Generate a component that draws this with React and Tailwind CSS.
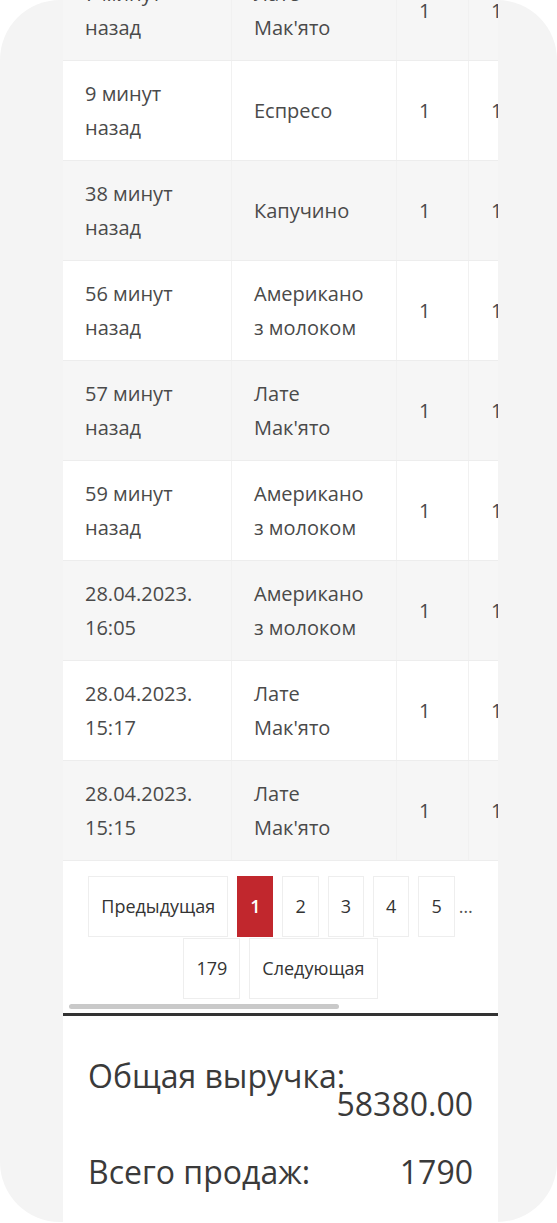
const rows = [
  { time: ["7 минут", "назад"], item: ["Лате", "Мак'ято"] },
  { time: ["9 минут", "назад"], item: ["Еспресо"] },
  { time: ["38 минут", "назад"], item: ["Капучино"] },
  { time: ["56 минут", "назад"], item: ["Американо", "з молоком"] },
  { time: ["57 минут", "назад"], item: ["Лате", "Мак'ято"] },
  { time: ["59 минут", "назад"], item: ["Американо", "з молоком"] },
  { time: ["28.04.2023.", "16:05"], item: ["Американо", "з молоком"] },
  { time: ["28.04.2023.", "15:17"], item: ["Лате", "Мак'ято"] },
  { time: ["28.04.2023.", "15:15"], item: ["Лате", "Мак'ято"] },
];

const pages = ["1", "2", "3", "4", "5"];

export default function App() {
  return (
    <div className="h-[1223px] w-[557px] overflow-hidden bg-white font-['Open_Sans','Noto_Sans',sans-serif]">
      <div className="h-[1222px] w-[557px] overflow-hidden rounded-[60px] bg-[#f4f4f4] pl-[63px] pr-[59px]">
        <div className="flex h-full flex-col bg-white">
          <div className="-mt-[39px] overflow-hidden">
            <div className="w-[700px]">
              {rows.map((r, i) => (
                <div key={i} className={`flex h-[100px] border-b border-[#ededed] text-[20px] leading-[34px] text-[#4a4a4a] ${i % 2 === 0 ? "bg-[#f6f6f6]" : "bg-white"}`}>
                  <div className="flex w-[169px] flex-col justify-center border-r border-[#f1f1f1] px-[22px]">
                    {r.time.map((t) => <span key={t}>{t}</span>)}
                  </div>
                  <div className="flex w-[165px] flex-col justify-center border-r border-[#f1f1f1] px-[22px]">
                    {r.item.map((t) => <span key={t}>{t}</span>)}
                  </div>
                  <div className="flex w-[72px] items-center border-r border-[#f1f1f1] px-[22px]">1</div>
                  <div className="flex w-[120px] items-center border-r border-[#f1f1f1] px-[22px]">1</div>
                  <div className="flex flex-1 items-center px-[22px]">1</div>
                </div>
              ))}
            </div>
          </div>

          <div className="flex flex-wrap justify-center gap-x-[9px] gap-y-[1px] px-[6px] pt-[15px] text-[18px] text-[#333]">
            <div className="flex h-[61px] items-center border border-[#eeeeee] px-[12px]">Предыдущая</div>
            {pages.map((p) => (
              <div key={p} className="flex items-center gap-[4px]">
                <div className={`flex h-[61px] items-center px-[12px] ${p === "1" ? "border border-[#c1272d] bg-[#c1272d] font-semibold text-white" : "border border-[#eeeeee]"}`}>{p}</div>
                {p === "5" && <span className="text-[#555]">…</span>}
              </div>
            ))}
            <div className="flex h-[61px] items-center border border-[#eeeeee] px-[12px]">179</div>
            <div className="flex h-[61px] items-center border border-[#eeeeee] px-[12px]">Следующая</div>
          </div>

          <div className="mt-[5px] pl-[6px]">
            <div className="h-[5px] w-[270px] rounded-full bg-[#c9c9c9]" />
          </div>
          <div className="mt-[4px] h-[3px] bg-[#333]" />

          <div className="px-[25px] pt-[40px] text-[32px] leading-[40px] text-[#3a3a3a]">
            <div>Общая выручка:</div>
            <div className="-mt-[12px] text-right">58380.00</div>
            <div className="mt-[28px] flex justify-between">
              <span>Всего продаж:</span>
              <span>1790</span>
            </div>
          </div>
        </div>
      </div>
    </div>
  );
}
